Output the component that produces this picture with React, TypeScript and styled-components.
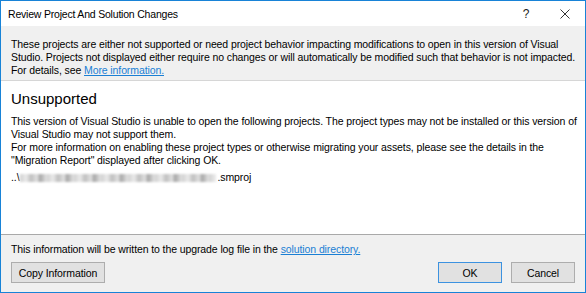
import React from 'react';
import styled, { createGlobalStyle } from 'styled-components';

const GlobalStyle = createGlobalStyle`
  html, body {
    margin: 0;
    padding: 0;
    background: #ffffff;
  }
  body {
    font-family: "Liberation Sans", Arial, sans-serif;
    font-size: 10.5px;
    letter-spacing: -0.1px;
    color: #000000;
  }
`;

const Window = styled.div`
  width: 586px;
  height: 293px;
  box-sizing: border-box;
  border: 1px solid #1883d7;
  background: #ffffff;
  display: flex;
  flex-direction: column;
  overflow: hidden;
`;

const TitleBar = styled.div`
  height: 25px;
  display: flex;
  align-items: center;
  padding-left: 7px;
  font-size: 10.5px;
  letter-spacing: -0.2px;
`;

const Title = styled.div`
  flex: 1;
`;

const TitleButton = styled.div<{ $w: number }>`
  width: ${p => p.$w}px;
  height: 25px;
  display: flex;
  align-items: center;
  justify-content: center;
  font-size: 12px;
  color: #222;
`;

const InfoBand = styled.div`
  background: #f0f0f0;
  height: 55px;
  box-sizing: border-box;
  padding: 12px 10px 0;
  line-height: 13px;
  border-bottom: 1px solid #d6d6d6;
`;

const Line = styled.div`
  white-space: nowrap;
`;

const Link = styled.a`
  color: #1a7fd4;
  text-decoration: underline;
`;

const Content = styled.div`
  flex: 1;
  padding: 9px 10px 0;
  line-height: 13px;
`;

const Heading = styled.div`
  font-size: 15px;
  letter-spacing: 0;
  line-height: 18px;
  margin-bottom: 7px;
`;

const PathRow = styled.div`
  margin-top: 4px;
  display: flex;
  align-items: center;
  white-space: nowrap;
`;

const Blurred = styled.span`
  display: inline-block;
  width: 196px;
  height: 8px;
  margin: 0 1px;
  background: repeating-linear-gradient(
    90deg,
    #cfcfcf 0px,
    #ebebeb 6px,
    #bfbfbf 11px,
    #e2e2e2 17px,
    #a6a6a6 20px,
    #e6e6e6 27px
  );
  filter: blur(1px);
`;

const Footer = styled.div`
  background: #f0f0f0;
  border-top: 1px solid #a9a9a9;
  height: 58px;
  box-sizing: border-box;
  padding: 8px 10px 0;
  display: flex;
  flex-direction: column;
`;

const FooterText = styled.div`
  line-height: 13px;
`;

const ButtonRow = styled.div`
  display: flex;
  align-items: center;
  margin-top: 6px;
`;

const Spacer = styled.div`
  flex: 1;
`;

const Button = styled.button<{ $primary?: boolean; $w: number }>`
  width: ${p => p.$w}px;
  height: 21px;
  box-sizing: border-box;
  background: #e1e1e1;
  border: 1px solid ${p => (p.$primary ? '#3c92e0' : '#adadad')};
  font-family: inherit;
  font-size: 10.5px;
  letter-spacing: -0.1px;
  color: #000;
  padding: 0;
  margin-left: 9px;
  &:first-child {
    margin-left: 0;
  }
`;

export default function App() {
  return (
    <>
      <GlobalStyle />
      <Window>
        <TitleBar>
          <Title>Review Project And Solution Changes</Title>
          <TitleButton $w={38}>?</TitleButton>
          <TitleButton $w={40}>
            <svg width="10" height="10" viewBox="0 0 10 10">
              <path d="M0.5 0.5 L9.5 9.5 M9.5 0.5 L0.5 9.5" stroke="#333" strokeWidth="1" fill="none" />
            </svg>
          </TitleButton>
        </TitleBar>
        <InfoBand>
          <Line>
            These projects are either not supported or need project behavior impacting modifications to open in this version of Visual
          </Line>
          <Line>
            Studio. Projects not displayed either require no changes or will automatically be modified such that behavior is not impacted.
          </Line>
          <Line>
            For details, see <Link>More information.</Link>
          </Line>
        </InfoBand>
        <Content>
          <Heading>Unsupported</Heading>
          <Line>
            This version of Visual Studio is unable to open the following projects. The project types may not be installed or this version of
          </Line>
          <Line>Visual Studio may not support them.</Line>
          <Line>
            For more information on enabling these project types or otherwise migrating your assets, please see the details in the
          </Line>
          <Line>"Migration Report" displayed after clicking OK.</Line>
          <PathRow>
            ..\<Blurred />.smproj
          </PathRow>
        </Content>
        <Footer>
          <FooterText>
            This information will be written to the upgrade log file in the <Link>solution directory.</Link>
          </FooterText>
          <ButtonRow>
            <Button $w={94}>Copy Information</Button>
            <Spacer />
            <Button $w={64} $primary>OK</Button>
            <Button $w={64}>Cancel</Button>
          </ButtonRow>
        </Footer>
      </Window>
    </>
  );
}
